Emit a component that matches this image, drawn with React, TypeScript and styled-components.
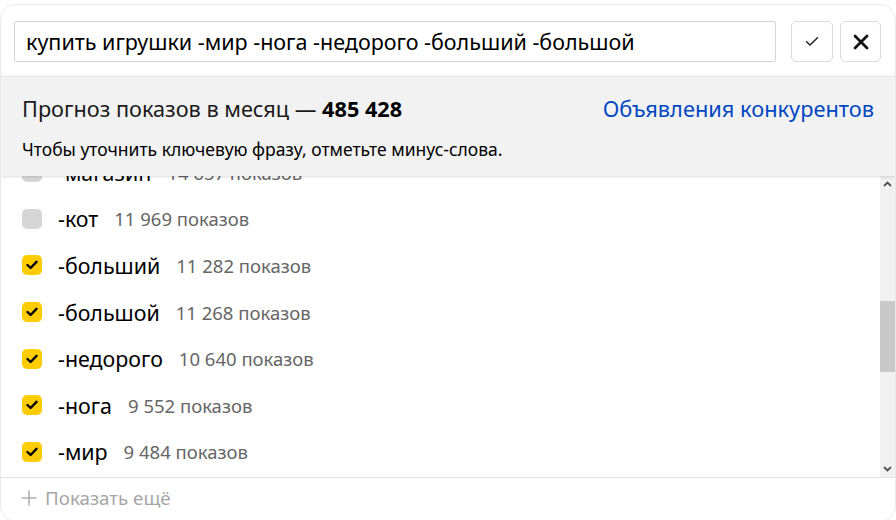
import React, { useLayoutEffect, useRef } from "react";
import styled, { createGlobalStyle } from "styled-components";

const Global = createGlobalStyle`
  html, body { margin: 0; padding: 0; background: #fff; overflow: hidden; }
  body { font-family: "Noto Sans", "Open Sans", Arial, sans-serif; color: #000; }
  * { box-sizing: border-box; }
`;

const Card = styled.div`
  margin-top: 4px;
  width: 896px;
  height: 518px;
  border: 1px solid #e9e9e9;
  border-radius: 16px;
  overflow: hidden;
  display: flex;
  flex-direction: column;
  background: #fff;
`;

const TopBar = styled.div`
  display: flex;
  align-items: center;
  padding: 16px 14px 14px 13px;
  gap: 15px;
`;

const Input = styled.div`
  flex: 1;
  height: 41px;
  border: 1px solid #d6d6d6;
  border-radius: 2px;
  display: flex;
  align-items: center;
  padding-left: 11px;
  font-size: 21.5px;
  color: #000;
  white-space: nowrap;
`;

const Buttons = styled.div`
  display: flex;
  gap: 7px;
`;

const IconButton = styled.button<{ $w: number }>`
  width: ${(p) => p.$w}px;
  height: 41px;
  border: 1px solid #dcdcdc;
  border-radius: 5px;
  background: #fff;
  display: flex;
  align-items: center;
  justify-content: center;
  padding: 0;
`;

const Header = styled.div`
  position: relative;
  z-index: 1;
  height: 100px;
  background: #f2f2f2;
  border-top: 1px solid #e6e6e6;
  padding: 19px 21px 0 21px;
  box-shadow: 0 1px 3px rgba(0, 0, 0, 0.14);
`;

const TitleRow = styled.div`
  display: flex;
  justify-content: space-between;
  align-items: center;
  height: 24px;
  font-size: 21.7px;
`;

const Title = styled.div`
  color: #1a1a1a;
  b { font-weight: 700; color: #000; }
`;

const Link = styled.a`
  color: #0047c2;
  text-decoration: none;
  font-size: 21.8px;
`;

const Hint = styled.div`
  margin-top: 19px;
  font-size: 17.5px;
  line-height: 20px;
  color: #000;
`;

const ListArea = styled.div`
  display: flex;
  height: 301px;
`;

const List = styled.div`
  flex: 1;
  overflow-y: scroll;
  scrollbar-width: none;
  &::-webkit-scrollbar { display: none; }
  padding-bottom: 30px;
`;

const Row = styled.div`
  height: 46.6px;
  display: flex;
  align-items: center;
  padding-left: 21px;
`;

const Box = styled.div<{ $on: boolean }>`
  width: 20px;
  height: 20px;
  border-radius: 5px;
  background: ${(p) => (p.$on ? "#ffcc00" : "#d6d6d6")};
  display: flex;
  align-items: center;
  justify-content: center;
  flex: none;
`;

const Word = styled.span`
  margin-left: 16px;
  font-size: 21.4px;
  color: #000;
`;

const Count = styled.span`
  margin-left: 16px;
  font-size: 18.5px;
  color: #666;
`;

const Scrollbar = styled.div`
  width: 15px;
  background: #f1f1f1;
  display: flex;
  flex-direction: column;
  align-items: center;
`;

const Arrow = styled.div`
  height: 16px;
  width: 100%;
  display: flex;
  align-items: center;
  justify-content: center;
`;

const Track = styled.div`
  flex: 1;
  width: 100%;
  padding-top: 109px;
`;

const Thumb = styled.div`
  height: 71px;
  width: 100%;
  background: #c8c8c8;
`;

const Footer = styled.div`
  border-top: 1px solid #e3e3e3;
  height: 40px;
  display: flex;
  align-items: center;
  padding-left: 20px;
  gap: 8px;
  font-size: 18.75px;
  color: #a6a6a6;
`;

const rows = [
  { w: "-магазин", c: "14 657", on: false },
  { w: "-кот", c: "11 969", on: false },
  { w: "-больший", c: "11 282", on: true },
  { w: "-большой", c: "11 268", on: true },
  { w: "-недорого", c: "10 640", on: true },
  { w: "-нога", c: "9 552", on: true },
  { w: "-мир", c: "9 484", on: true },
];

const Tick = () => (
  <svg width="12" height="10" viewBox="0 0 12 10">
    <path d="M1.5 5 L4.6 8 L10.5 1.8" fill="none" stroke="#000" strokeWidth="2.4" strokeLinecap="round" strokeLinejoin="round" />
  </svg>
);

export default function App() {
  const listRef = useRef<HTMLDivElement>(null);
  useLayoutEffect(() => {
    if (listRef.current) listRef.current.scrollTop = 27;
  }, []);
  return (
    <>
      <Global />
      <Card>
        <TopBar>
          <Input>купить игрушки -мир -нога -недорого -больший -большой</Input>
          <Buttons>
            <IconButton $w={42}>
              <svg width="14" height="11" viewBox="0 0 14 11">
                <path d="M1.5 5.8 L5 9 L12.5 1.8" fill="none" stroke="#222" strokeWidth="1.5" strokeLinecap="round" strokeLinejoin="round" />
              </svg>
            </IconButton>
            <IconButton $w={41}>
              <svg width="16" height="16" viewBox="0 0 16 16">
                <path d="M2 2 L14 14 M14 2 L2 14" stroke="#111" strokeWidth="2.8" strokeLinecap="round" />
              </svg>
            </IconButton>
          </Buttons>
        </TopBar>
        <Header>
          <TitleRow>
            <Title>
              Прогноз показов в месяц — <b>485 428</b>
            </Title>
            <Link href="#">Объявления конкурентов</Link>
          </TitleRow>
          <Hint>Чтобы уточнить ключевую фразу, отметьте минус-слова.</Hint>
        </Header>
        <ListArea>
          <List ref={listRef}>
            {rows.map((r) => (
              <Row key={r.w}>
                <Box $on={r.on}>{r.on && <Tick />}</Box>
                <Word>{r.w}</Word>
                <Count>{r.c} показов</Count>
              </Row>
            ))}
          </List>
          <Scrollbar>
            <Arrow>
              <svg width="9" height="6" viewBox="0 0 9 6">
                <path d="M1 5 L4.5 1.5 L8 5" fill="none" stroke="#505050" strokeWidth="1.8" />
              </svg>
            </Arrow>
            <Track>
              <Thumb />
            </Track>
            <Arrow>
              <svg width="9" height="6" viewBox="0 0 9 6">
                <path d="M1 1 L4.5 4.5 L8 1" fill="none" stroke="#505050" strokeWidth="1.8" />
              </svg>
            </Arrow>
          </Scrollbar>
        </ListArea>
        <Footer>
          <svg width="16" height="16" viewBox="0 0 16 16">
            <path d="M8 0.5 V15.5 M0.5 8 H15.5" stroke="#b0b0b0" strokeWidth="1.6" />
          </svg>
          Показать ещё
        </Footer>
      </Card>
    </>
  );
}
